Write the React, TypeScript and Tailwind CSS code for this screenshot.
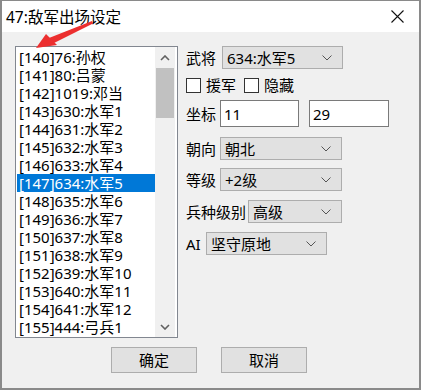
import React from "react";

const items = [
  "[140]76:孙权",
  "[141]80:吕蒙",
  "[142]1019:邓当",
  "[143]630:水军1",
  "[144]631:水军2",
  "[145]632:水军3",
  "[146]633:水军4",
  "[147]634:水军5",
  "[148]635:水军6",
  "[149]636:水军7",
  "[150]637:水军8",
  "[151]638:水军9",
  "[152]639:水军10",
  "[153]640:水军11",
  "[154]641:水军12",
  "[155]444:弓兵1",
];

const font = { fontFamily: '"Noto Sans", "Noto Sans CJK SC", sans-serif' };

function Chevron() {
  return (
    <svg width="10" height="6" viewBox="0 0 10 6" className="shrink-0">
      <path d="M0.5 0.5 L5 5 L9.5 0.5" fill="none" stroke="#555" strokeWidth="1" />
    </svg>
  );
}

function Select({ value, w }: { value: string; w: string }) {
  return (
    <div
      className={`flex h-[23px] ${w} items-center justify-between border border-[#adadad] bg-[#e1e1e1] pl-[4px] pr-[10px] text-[15px] leading-[20px] text-black`}
    >
      <span>{value}</span>
      <Chevron />
    </div>
  );
}

export default function App() {
  return (
    <div
      className="relative h-[391px] w-[421px] overflow-hidden bg-white"
      style={font}
    >
      <div className="flex h-[390px] w-[421px] flex-col border-x-2 border-b-2 border-t border-[#8a8a8a]">
        {/* title bar */}
        <div className="flex h-[31px] shrink-0 items-center justify-between bg-white pl-[4px] pr-[15px]">
          <span className="text-[15.5px] leading-[20px] text-black">47:敌军出场设定</span>
          <svg width="13" height="13" viewBox="0 0 13 13">
            <path d="M0.5 0.5 L12.5 12.5 M12.5 0.5 L0.5 12.5" stroke="#111" strokeWidth="1.1" />
          </svg>
        </div>
        {/* body */}
        <div className="flex flex-1 flex-col bg-[#f0f0f0]">
          <div className="flex pl-[13px] pt-[14px]">
            {/* listbox */}
            <div className="flex h-[292px] w-[163px] border border-[#828790] bg-white">
              <div className="flex w-[139px] flex-col overflow-hidden pl-[1px] pt-[1px]">
                {items.map((t, i) => (
                  <div
                    key={t}
                    className={`h-[18px] pl-[2px] text-[15px] leading-[18px] whitespace-nowrap ${
                      i === 7 ? "bg-[#0078d7] text-white" : "text-black"
                    }`}
                  >
                    {t}
                  </div>
                ))}
              </div>
              <div className="flex w-[20px] flex-col bg-[#f0f0f0]">
                <div className="flex h-[21px] items-center justify-center">
                  <svg width="10" height="6" viewBox="0 0 10 6">
                    <path d="M1 5 L5 1 L9 5" fill="none" stroke="#606060" strokeWidth="1.6" />
                  </svg>
                </div>
                <div className="mx-[1px] h-[50px] bg-[#c1c1c1]" />
                <div className="flex-1" />
                <div className="flex h-[21px] items-center justify-center">
                  <svg width="10" height="6" viewBox="0 0 10 6">
                    <path d="M1 1 L5 5 L9 1" fill="none" stroke="#606060" strokeWidth="1.6" />
                  </svg>
                </div>
              </div>
            </div>
            {/* right column */}
            <div className="ml-[8px] flex flex-col text-[15px] leading-[20px] text-black">
              <div className="flex items-center">
                <span className="w-[36px]">武将</span>
                <Select value="634:水军5" w="w-[121px]" />
              </div>
              <div className="mt-[7px] flex h-[18px] items-center">
                <div className="h-[15px] w-[15px] border border-[#333] bg-white" />
                <span className="ml-[5px]">援军</span>
                <div className="ml-[8px] h-[15px] w-[15px] border border-[#333] bg-white" />
                <span className="ml-[5px]">隐藏</span>
              </div>
              <div className="mt-[6px] flex items-center">
                <span className="w-[34px]">坐标</span>
                <div className="flex h-[27px] w-[79px] items-center border border-[#7a7a7a] bg-white pl-[3px]">11</div>
                <div className="ml-[10px] flex h-[27px] w-[80px] items-center border border-[#7a7a7a] bg-white pl-[3px]">29</div>
              </div>
              <div className="mt-[10px] flex items-center">
                <span className="w-[34px]">朝向</span>
                <Select value="朝北" w="w-[122px]" />
              </div>
              <div className="mt-[8px] flex items-center">
                <span className="w-[34px]">等级</span>
                <Select value="+2级" w="w-[122px]" />
              </div>
              <div className="mt-[9px] flex items-center">
                <span className="w-[62px]">兵种级别</span>
                <Select value="高级" w="w-[94px]" />
              </div>
              <div className="mt-[9px] flex items-center">
                <span className="w-[20px] text-[15px] text-black">AI</span>
                <Select value="坚守原地" w="w-[121px]" />
              </div>
            </div>
          </div>
          {/* buttons */}
          <div className="mt-[9px] flex pl-[109px]">
            <div className="flex h-[26px] w-[86px] items-center justify-center border border-[#adadad] bg-[#e1e1e1] text-[15px] leading-[20px] text-black">
              确定
            </div>
            <div className="ml-[24px] flex h-[26px] w-[86px] items-center justify-center border border-[#adadad] bg-[#e1e1e1] text-[15px] leading-[20px] text-black">
              取消
            </div>
          </div>
        </div>
      </div>
      {/* red arrow annotation */}
      <svg className="absolute left-0 top-0" width="421" height="391" viewBox="0 0 421 391">
        <polygon points="49,38 92,21 93,23.5 53,43.5" fill="#ec2f2f" />
        <polygon points="36,48 46,34 57,45" fill="#ec2f2f" />
      </svg>
    </div>
  );
}
